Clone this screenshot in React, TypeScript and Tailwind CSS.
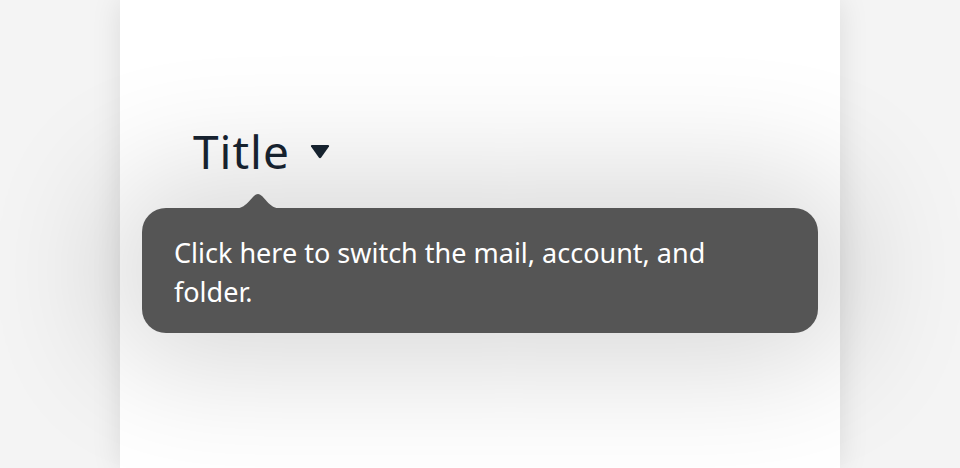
export default function App() {
  return (
    <div className="min-h-screen bg-[#f4f4f4] font-['Noto_Sans',sans-serif]">
      <div className="mx-auto w-[720px] h-[468px] bg-white shadow-[0_0_28px_rgba(0,0,0,0.10)] flex flex-col px-[22px] pt-[121px]">
        {/* Title with dropdown caret */}
        <div className="flex items-center gap-[20px] pl-[51px] h-[60px]">
          <span className="text-[46px] leading-none tracking-[1px] text-[#182431]">Title</span>
          <svg width="20" height="14" viewBox="0 0 20 14" className="mt-[1px]">
            <path d="M1 1.5 Q0.2 0 2 0 H18 Q19.8 0 19 1.5 L11.2 12.6 Q10 14 8.8 12.6 Z" fill="#182431" />
          </svg>
        </div>

        {/* Tooltip */}
        <div className="relative mt-[27px] rounded-[24px] bg-[#555555] shadow-[0_0_130px_30px_rgba(0,0,0,0.16)] pl-[32px] pr-[60px] pt-[25px] pb-[22px]">
          <svg width="48" height="15" viewBox="0 0 48 15" className="absolute top-[-14px] left-[92px]">
            <path d="M0 15 C14 15 18 0 24 0 C30 0 34 15 48 15 Z" fill="#555555" />
          </svg>
          <p className="text-[27px] leading-[39px] text-white">
            Click here to switch the mail, account, and folder.
          </p>
        </div>
      </div>
    </div>
  );
}
